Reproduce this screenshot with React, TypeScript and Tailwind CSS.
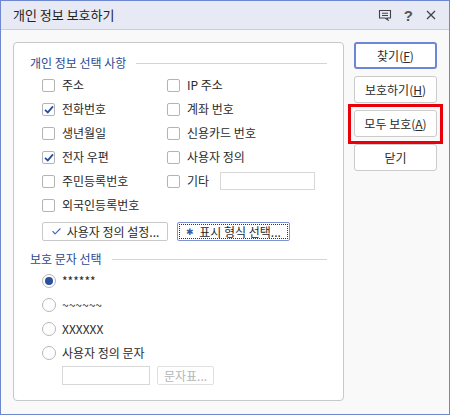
import { Check } from 'lucide-react';

const font = { fontFamily: '"Noto Sans CJK KR", "Noto Sans", sans-serif' };

const Box = ({ checked }: { checked?: boolean }) => (
  <span className="w-[13px] h-[13px] shrink-0 rounded-[2px] border border-[#b4b4b4] bg-white flex items-center justify-center">
    {checked && (
      <svg width="10" height="9" viewBox="0 0 10 9">
        <path d="M1 4.8 L3.8 7.4 L9 1.4" fill="none" stroke="#2b4c9c" strokeWidth="1.8" />
      </svg>
    )}
  </span>
);

const CheckRow = ({ label, checked }: { label: string; checked?: boolean }) => (
  <div className="h-[24px] flex items-center gap-[7px]">
    <Box checked={checked} />
    <span className="text-[12px] text-[#2a2a2a] leading-none">{label}</span>
  </div>
);

const Radio = ({ label, on }: { label: string; on?: boolean }) => (
  <div className="h-[24px] flex items-center gap-[6px]">
    <span className="w-[14px] h-[14px] shrink-0 rounded-full border border-[#b8b8b8] bg-white flex items-center justify-center">
      {on && <span className="w-[8px] h-[8px] rounded-full bg-[#2d4f9e]" />}
    </span>
    <span className="text-[12px] text-[#2a2a2a] leading-none">{label}</span>
  </div>
);

const Section = ({ title, children }: { title: string; children: React.ReactNode }) => (
  <>
    <div className="h-[20px] flex items-center gap-[10px]">
      <span className="text-[12px] text-[#2b4a93] leading-none whitespace-nowrap">{title}</span>
      <span className="flex-1 h-px bg-[#d4d4d4]" />
    </div>
    <div className="pl-[12px]">{children}</div>
  </>
);

const SideBtn = ({ children, focus }: { children: React.ReactNode; focus?: boolean }) => (
  <button
    className={
      'w-[83px] h-[27px] rounded-[3px] bg-white text-[12px] text-[#2a2a2a] flex items-center justify-center ' +
      (focus ? 'border-2 border-[#6c87d8]' : 'border border-[#cbcbcb]')
    }
  >
    {children}
  </button>
);

export default function App() {
  return (
    <div style={font} className="w-[450px] h-[415px] border border-[#6d88d0] bg-[#f9f9f9] flex flex-col overflow-hidden">
      <div className="h-[29px] shrink-0 bg-[#e7e9f5] border-b border-[#c9cde2] flex items-center pl-[12px] pr-[10px]">
        <span className="text-[13px] text-[#222] flex-1">개인 정보 보호하기</span>
        <svg width="14" height="12" viewBox="0 0 14 12" className="mr-[12px]">
          <path d="M1.5 1.5 H12.5 V9 H9 L10 11 L7 9 H1.5 Z" fill="none" stroke="#444" strokeWidth="1.1" />
          <path d="M4 4.3 H10 M4 6.5 H10" stroke="#444" strokeWidth="1.1" />
        </svg>
        <span className="text-[15px] font-bold text-[#555] mr-[13px] leading-none" style={{ fontFamily: '"Liberation Sans", sans-serif' }}>?</span>
        <svg width="10" height="10" viewBox="0 0 10 10" className="mr-[3px]">
          <path d="M1 1 L9 9 M9 1 L1 9" stroke="#444" strokeWidth="1.3" />
        </svg>
      </div>

      <div className="flex pl-[12px] pt-[12px] gap-[10px] relative">
        <div className="w-[331px] h-[359px] bg-white border border-[#c8c8c8] rounded-[4px] pl-[16px] pr-[16px] pt-[10px]">
          <Section title="개인 정보 선택 사항">
            <div className="flex">
              <div className="w-[125px]">
                <CheckRow label="주소" />
                <CheckRow label="전화번호" checked />
                <CheckRow label="생년월일" />
                <CheckRow label="전자 우편" checked />
                <CheckRow label="주민등록번호" />
                <CheckRow label="외국인등록번호" />
              </div>
              <div>
                <CheckRow label="IP 주소" />
                <CheckRow label="계좌 번호" />
                <CheckRow label="신용카드 번호" />
                <CheckRow label="사용자 정의" />
                <div className="h-[24px] flex items-center">
                  <CheckRow label="기타" />
                  <span className="ml-[11px] w-[95px] h-[18px] border border-[#d8d8d8] bg-white" />
                </div>
              </div>
            </div>
            <div className="flex gap-[9px] mt-[5px]">
              <button className="w-[126px] h-[19px] border border-[#c9c9c9] rounded-[2px] bg-white flex items-center justify-center gap-[5px] text-[12px] text-[#2a2a2a]">
                <Check size={11} strokeWidth={2.5} color="#4a6bb5" />
                사용자 정의 설정...
              </button>
              <button className="w-[113px] h-[19px] border border-[#7d93d3] rounded-[2px] bg-white p-px">
                <span className="w-full h-full border border-dotted border-[#333] flex items-center justify-center gap-[5px] text-[12px] text-[#2a2a2a]">
                  <span className="text-[#3b5aa3] text-[9px] leading-none">✱</span>
                  표시 형식 선택...
                </span>
              </button>
            </div>
          </Section>
          <div className="mt-[8px]">
            <Section title="보호 문자 선택">
              <Radio label="******" on />
              <Radio label="~~~~~~" />
              <Radio label="XXXXXX" />
              <Radio label="사용자 정의 문자" />
              <div className="flex gap-[7px] mt-px pl-[20px]">
                <span className="w-[88px] h-[19px] border border-[#d8d8d8] bg-white" />
                <button className="w-[57px] h-[19px] border border-[#e0e0e0] rounded-[2px] bg-white text-[12px] text-[#b5b5b5] flex items-center justify-center">
                  문자표...
                </button>
              </div>
            </Section>
          </div>
        </div>

        <div className="flex flex-col gap-[7px]">
          <SideBtn focus>
            찾기(<span className="underline">F</span>)
          </SideBtn>
          <SideBtn>
            보호하기(<span className="underline">H</span>)
          </SideBtn>
          <SideBtn>
            모두 보호(<span className="underline">A</span>)
          </SideBtn>
          <SideBtn>닫기</SideBtn>
        </div>

        <span className="absolute left-[347px] top-[74px] w-[95px] h-[40px] border-[3px] border-[#e8000b] pointer-events-none" />
      </div>
    </div>
  );
}
